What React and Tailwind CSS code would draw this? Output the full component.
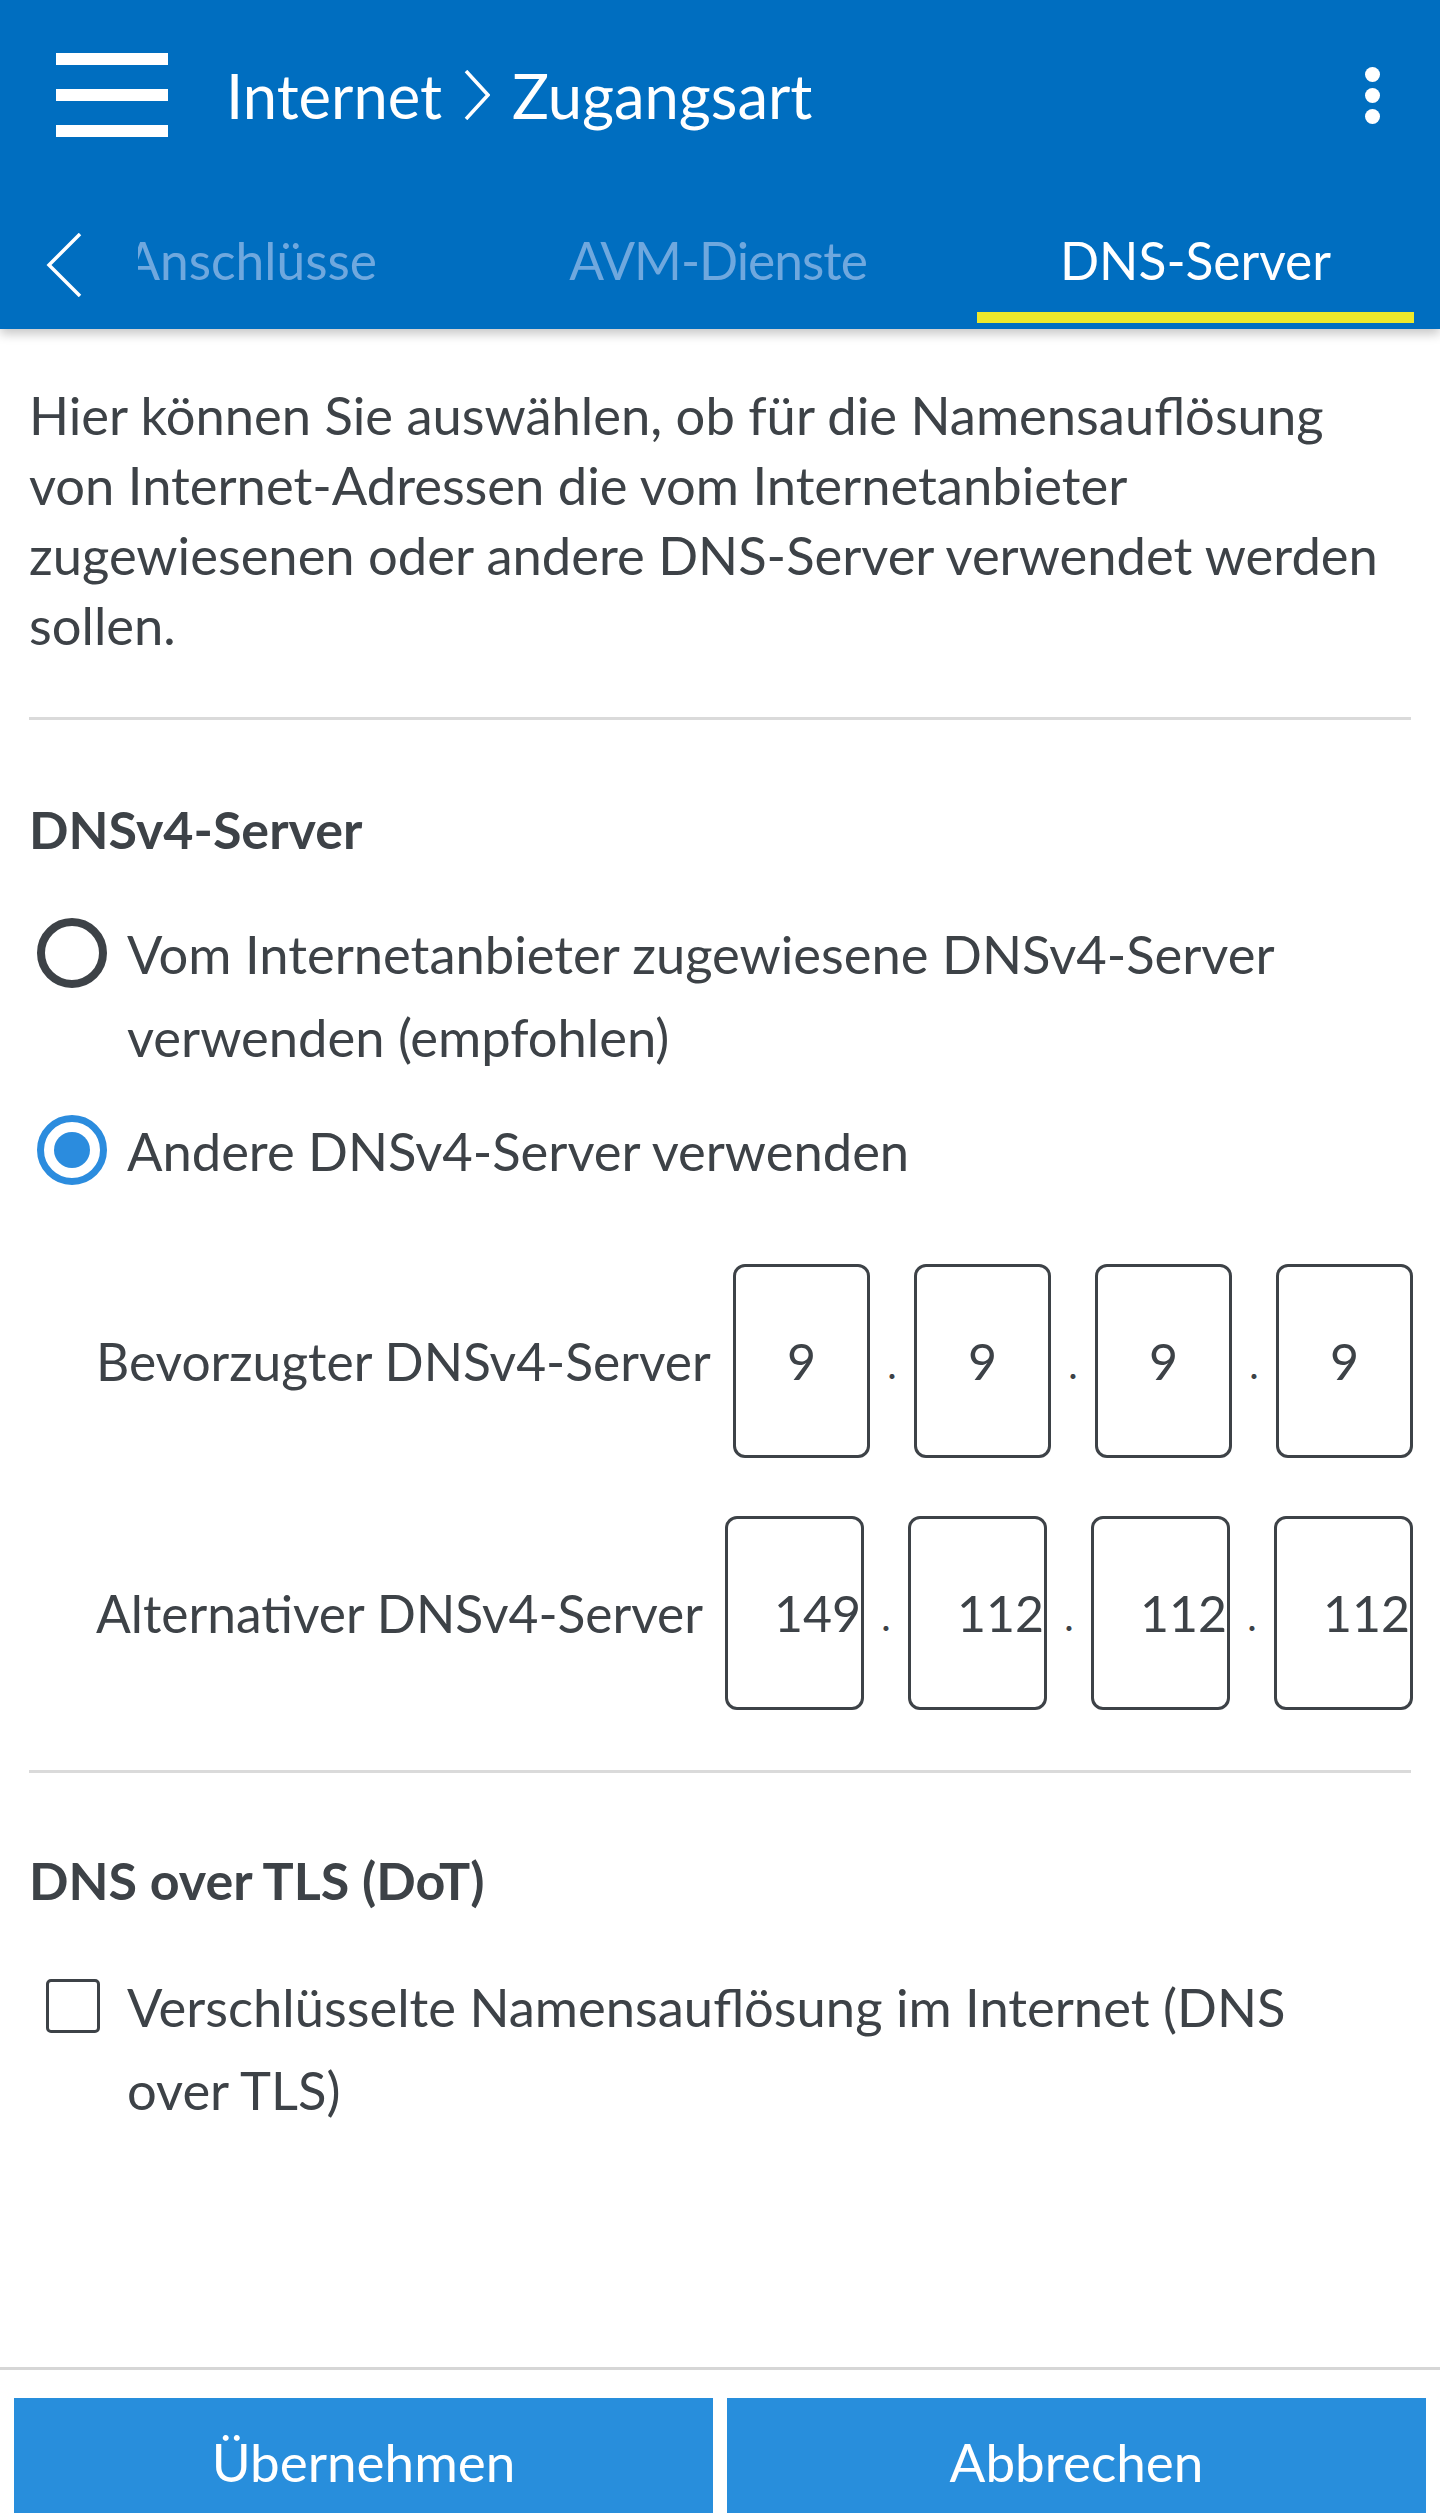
import { useState } from 'react';

const dark = 'text-[#3d4247]';

function Radio({ checked }) {
  return checked ? (
    <span className="mt-[6px] ml-[8px] grid h-[70px] w-[70px] shrink-0 place-items-center rounded-full border-[7px] border-[#2b8cde] bg-white">
      <span className="h-[36px] w-[36px] rounded-full bg-[#2b8cde]" />
    </span>
  ) : (
    <span className="mt-[6px] ml-[8px] h-[70px] w-[70px] shrink-0 rounded-full border-[8px] border-[#3d4247] bg-white" />
  );
}

function IpRow({ label, parts, boxWidth, align }) {
  return (
    <div className="flex items-center">
      <span className="flex-1 whitespace-nowrap pl-[67px] text-[51.5px] leading-[60px]">{label}</span>
      <div className="flex items-center">
        {parts.map((part, i) => (
          <div key={i} className="flex items-center">
            {i > 0 && <span className="w-[44px] pt-[6px] text-center text-[40px] leading-[60px]">.</span>}
            <div
              className={`flex h-[194px] items-center rounded-[12px] border-[3px] border-[#3d4247] bg-white text-[50px] leading-[60px] ${
                align === 'right' ? 'justify-end' : 'justify-center'
              }`}
              style={{ width: boxWidth }}
            >
              {part}
            </div>
          </div>
        ))}
      </div>
    </div>
  );
}

export default function App() {
  const [dot, setDot] = useState(false);

  return (
    <div className={`flex min-h-[2513px] w-full flex-col bg-white font-['Lato',sans-serif] ${dark}`}>
      <header className="relative z-10 h-[329px] bg-[#006ec0] text-white shadow-[0_5px_10px_rgba(0,0,0,0.22)]">
        <div className="flex h-[190px] items-center">
          <div className="ml-[56px] flex w-[112px] flex-col gap-[24px]">
            <span className="h-[12px] bg-white" />
            <span className="h-[12px] bg-white" />
            <span className="h-[12px] bg-white" />
          </div>
          <h1 className="ml-[58px] flex items-center text-[61.5px] leading-[70px] font-normal">
            <span>Internet</span>
            <svg width="26" height="50" viewBox="0 0 26 50" className="mx-[22px]" fill="none" stroke="white" strokeWidth="3.5">
              <polyline points="2,1 24,25 2,49" />
            </svg>
            <span>Zugangsart</span>
          </h1>
          <div className="ml-auto mr-[60px] flex flex-col gap-[6px]">
            <span className="h-[15px] w-[15px] rounded-full bg-white" />
            <span className="h-[15px] w-[15px] rounded-full bg-white" />
            <span className="h-[15px] w-[15px] rounded-full bg-white" />
          </div>
        </div>

        <div className="flex h-[139px]">
          <div className="flex w-[138px] shrink-0 items-start pt-[43px] pl-[46px]">
            <svg width="36" height="64" viewBox="0 0 36 64" fill="none" stroke="white" strokeWidth="3.5">
              <polyline points="34,1 3,32 34,63" />
            </svg>
          </div>
          <div className="flex w-[1276px] overflow-hidden text-[51.5px] leading-[64px]">
            <div className="flex w-[321px] shrink-0 flex-col">
              <div className="flex h-[122px] items-center justify-end pt-[18px] pr-[82px] text-[#6fa8de]">
                <span className="whitespace-nowrap">Anschlüsse</span>
              </div>
            </div>
            <div className="flex w-[518px] shrink-0 flex-col">
              <div className="flex h-[122px] items-center justify-center pt-[18px] text-[#6fa8de]">
                <span className="whitespace-nowrap tracking-[-1px]">AVM-Dienste</span>
              </div>
            </div>
            <div className="flex w-[437px] shrink-0 flex-col">
              <div className="flex h-[122px] items-center justify-center pt-[18px]">
                <span className="whitespace-nowrap">DNS-Server</span>
              </div>
              <div className="h-[11px] bg-[#eee82a]" />
            </div>
          </div>
        </div>
      </header>

      <main className="flex flex-col px-[29px] pt-[51px]">
        <p className="whitespace-nowrap text-[52.5px] leading-[70px]">
          Hier können Sie auswählen, ob für die Namensauflösung
          <br />
          von Internet-Adressen die vom Internetanbieter
          <br />
          zugewiesenen oder andere DNS-Server verwendet werden
          <br />
          sollen.
        </p>

        <div className="mt-[57px] h-[3px] bg-[#dadada]" />

        <h2 className="mt-[79px] text-[52px] leading-[60px] font-bold">DNSv4-Server</h2>

        <label className="mt-[53px] flex items-start gap-[20px]">
          <Radio checked={false} />
          <span className="whitespace-nowrap text-[52.5px] leading-[83px]">
            Vom Internetanbieter zugewiesene DNSv4-Server
            <br />
            verwenden (empfohlen)
          </span>
        </label>

        <label className="mt-[31px] flex items-start gap-[20px]">
          <Radio checked />
          <span className="whitespace-nowrap text-[52.5px] leading-[83px]">Andere DNSv4-Server verwenden</span>
        </label>

        <div className="mt-[72px] -mr-[2px] flex flex-col gap-[58px]">
          <IpRow label="Bevorzugter DNSv4-Server" parts={['9', '9', '9', '9']} boxWidth={137} />
          <IpRow label="Alternativer DNSv4-Server" parts={['149', '112', '112', '112']} boxWidth={139} align="right" />
        </div>

        <div className="mt-[60px] h-[3px] bg-[#dadada]" />

        <h2 className="mt-[77px] text-[52px] leading-[60px] font-bold">DNS over TLS (DoT)</h2>

        <label className="mt-[55px] flex cursor-pointer items-start gap-[27px]" onClick={() => setDot((v) => !v)}>
          <span className="mt-[14px] ml-[17px] h-[54px] w-[54px] shrink-0 rounded-[5px] border-[3px] border-[#3d4247] bg-white">
            {dot && <span className="block h-full w-full bg-[#2b8cde]" />}
          </span>
          <span className="whitespace-nowrap text-[52.5px] leading-[83px]">
            Verschlüsselte Namensauflösung im Internet (DNS
            <br />
            over TLS)
          </span>
        </label>
      </main>

      <div className="flex-1" />

      <footer className="flex flex-col">
        <div className="h-[3px] bg-[#d6d6d6]" />
        <div className="flex gap-[14px] px-[14px] pt-[28px]">
          <button className="flex h-[115px] flex-1 justify-center bg-[#288edc] pt-[34px] text-[53px] leading-[60px] text-white">
            Übernehmen
          </button>
          <button className="flex h-[115px] flex-1 justify-center bg-[#288edc] pt-[34px] text-[53px] leading-[60px] text-white">
            Abbrechen
          </button>
        </div>
      </footer>
    </div>
  );
}
